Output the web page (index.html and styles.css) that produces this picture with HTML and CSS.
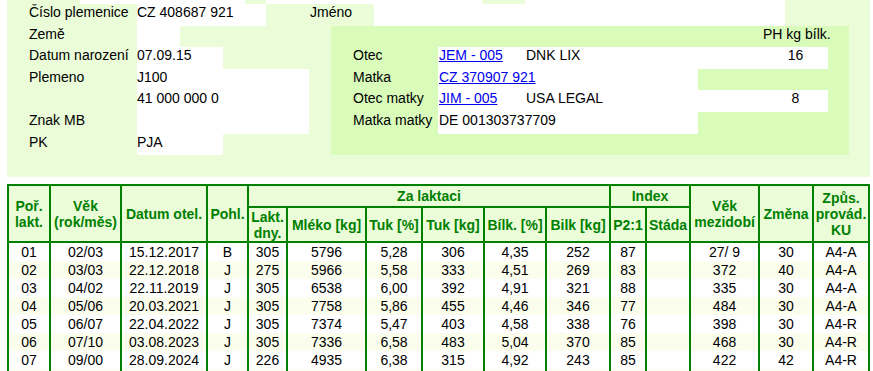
FILE: index.html
```html
<!DOCTYPE html>
<html lang="cs">
<head>
<meta charset="utf-8">
<title>Karta plemenice</title>
<link rel="stylesheet" href="styles.css">
</head>
<body>
<div class="top">
  <div class="strip">
    <span class="s1"></span><span class="s2 w"></span><span class="s3"></span><span class="s4 w"></span><span class="s5"></span><span class="s6 w"></span><span class="s7"></span>
  </div>
  <div class="row r1">
    <div class="lbl">Číslo plemenice</div>
    <div class="val w v1">CZ 408687 921</div>
    <div class="jm">Jméno</div>
    <div class="w jmv"></div>
  </div>
  <div class="main">
    <div class="left">
      <div class="row r2"><div class="lbl">Země</div><div class="val w vs"></div></div>
      <div class="row r3"><div class="lbl">Datum narození</div><div class="val w vm">07.09.15</div></div>
      <div class="row r4"><div class="lbl">Plemeno</div><div class="val w vl">J100</div></div>
      <div class="row r5"><div class="lbl"></div><div class="val w vl">41 000 000 0</div></div>
      <div class="row r6"><div class="lbl">Znak MB</div><div class="val w vl"></div></div>
      <div class="row r7"><div class="lbl">PK</div><div class="val w vm">PJA</div></div>
    </div>
    <div class="dark">
      <div class="row r2"><div class="dl"></div><div class="phh">PH kg bílk.</div></div>
      <div class="row r3"><div class="dl">Otec</div><div class="w dwide"><a href="#" class="lk">JEM - 005</a><span class="br">DNK LIX</span><span class="ph">16</span></div></div>
      <div class="row r4"><div class="dl">Matka</div><div class="w dnar"><a href="#" class="lk">CZ 370907 921</a></div></div>
      <div class="row r5"><div class="dl">Otec matky</div><div class="w dwide"><a href="#" class="lk">JIM - 005</a><span class="br">USA LEGAL</span><span class="ph">8</span></div></div>
      <div class="row r6"><div class="dl">Matka matky</div><div class="w dnar"><span class="lk">DE 001303737709</span></div></div>
      <div class="row r7"></div>
    </div>
  </div>
  <div class="tail"></div>
</div>

<table class="lak">
  <colgroup>
    <col class="c42"><col class="c71"><col class="c86"><col class="c41"><col class="c39"><col class="c79"><col class="c56"><col class="c62"><col class="c62"><col class="c64"><col class="c36"><col class="c44"><col class="c69"><col class="c54"><col class="c56">
  </colgroup>
  <thead>
    <tr class="hr1">
      <th rowspan="2">Poř.<br>lakt.</th>
      <th rowspan="2">Věk<br>(rok/měs)</th>
      <th rowspan="2">Datum otel.</th>
      <th rowspan="2">Pohl.</th>
      <th colspan="6">Za laktaci</th>
      <th colspan="2">Index</th>
      <th rowspan="2">Věk<br>mezidobí</th>
      <th rowspan="2">Změna</th>
      <th rowspan="2">Způs.<br>provád.<br>KU</th>
    </tr>
    <tr class="hr2">
      <th>Lakt.<br>dny.</th>
      <th>Mléko [kg]</th>
      <th>Tuk [%]</th>
      <th>Tuk [kg]</th>
      <th>Bílk. [%]</th>
      <th>Bilk [kg]</th>
      <th>P2:1</th>
      <th>Stáda</th>
    </tr>
  </thead>
  <tbody>
    <tr><td>01</td><td>02/03</td><td>15.12.2017</td><td>B</td><td>305</td><td>5796</td><td>5,28</td><td>306</td><td>4,35</td><td>252</td><td>87</td><td></td><td>27/ 9</td><td>30</td><td>A4-A</td></tr>
    <tr class="alt"><td>02</td><td>03/03</td><td>22.12.2018</td><td>J</td><td>275</td><td>5966</td><td>5,58</td><td>333</td><td>4,51</td><td>269</td><td>83</td><td></td><td>372</td><td>40</td><td>A4-A</td></tr>
    <tr><td>03</td><td>04/02</td><td>22.11.2019</td><td>J</td><td>305</td><td>6538</td><td>6,00</td><td>392</td><td>4,91</td><td>321</td><td>88</td><td></td><td>335</td><td>30</td><td>A4-A</td></tr>
    <tr class="alt"><td>04</td><td>05/06</td><td>20.03.2021</td><td>J</td><td>305</td><td>7758</td><td>5,86</td><td>455</td><td>4,46</td><td>346</td><td>77</td><td></td><td>484</td><td>30</td><td>A4-A</td></tr>
    <tr><td>05</td><td>06/07</td><td>22.04.2022</td><td>J</td><td>305</td><td>7374</td><td>5,47</td><td>403</td><td>4,58</td><td>338</td><td>76</td><td></td><td>398</td><td>30</td><td>A4-R</td></tr>
    <tr class="alt"><td>06</td><td>07/10</td><td>03.08.2023</td><td>J</td><td>305</td><td>7336</td><td>6,58</td><td>483</td><td>5,04</td><td>370</td><td>85</td><td></td><td>468</td><td>30</td><td>A4-R</td></tr>
    <tr><td>07</td><td>09/00</td><td>28.09.2024</td><td>J</td><td>226</td><td>4935</td><td>6,38</td><td>315</td><td>4,92</td><td>243</td><td>85</td><td></td><td>422</td><td>42</td><td>A4-R</td></tr>
    <tr class="alt"><td></td><td></td><td></td><td></td><td></td><td></td><td></td><td></td><td></td><td></td><td></td><td></td><td></td><td></td><td></td></tr>
  </tbody>
</table>
</body>
</html>
```

FILE: styles.css
```css
html, body {
  margin: 0;
  padding: 0;
  background: #ffffff;
}
body {
  padding-left: 7px;
  font-family: "Liberation Sans", Arial, sans-serif;
  font-size: 14px;
  line-height: 16px;
  color: #000000;
}

.top {
  width: 863px;
  background: #ebfcd9;
}
.w { background: #ffffff; }

.strip { display: flex; height: 4px; }
.strip span { display: block; height: 4px; }
.s1 { width: 73px; }
.s2 { width: 165px; }
.s3 { width: 21px; }
.s4 { width: 216px; }
.s5 { width: 43px; }
.s6 { width: 260px; }
.s7 { width: 85px; }

.row { display: flex; align-items: stretch; }
.r1 { height: 22px; }
.r2 { height: 21px; }
.r3 { height: 22px; }
.r4 { height: 21px; }
.r5 { height: 22px; }
.r6 { height: 22px; }
.r7 { height: 21px; }

.lbl {
  width: 130px;
  padding-left: 22px;
  box-sizing: border-box;
  white-space: nowrap;
}
.val { white-space: nowrap; }
.v1 { width: 129px; }
.vs { width: 43px; }
.vm { width: 86px; }
.vl { width: 172px; }

.jm {
  width: 108px;
  padding-left: 44px;
  box-sizing: border-box;
}
.jmv { width: 411px; }

.main { display: flex; }
.left { width: 324px; }
.dark {
  width: 518px;
  background: #d9fcba;
}

.dl {
  width: 107px;
  padding-left: 22px;
  box-sizing: border-box;
  white-space: nowrap;
}
.phh {
  margin-left: 325px;
  white-space: nowrap;
}
.dwide { width: 390px; display: flex; }
.dnar { width: 260px; display: flex; }
.lk {
  width: 88px;
  padding-left: 1px;
  box-sizing: border-box;
  white-space: nowrap;
  color: #0000ee;
}
.dnar .lk { width: auto; }
span.lk { color: #000000; }
.br { width: 237px; white-space: nowrap; }
.ph { width: 65px; text-align: center; }

.tail { height: 22px; }

/* lactation table */
.lak {
  margin-top: 7px;
  border-collapse: collapse;
  table-layout: fixed;
  width: 863px;
  border: 2px solid #008000;
}
.c36 { width: 36px; }
.c39 { width: 39px; }
.c41 { width: 41px; }
.c42 { width: 42px; }
.c44 { width: 44px; }
.c54 { width: 54px; }
.c56 { width: 56px; }
.c62 { width: 62px; }
.c64 { width: 64px; }
.c69 { width: 69px; }
.c71 { width: 71px; }
.c79 { width: 79px; }
.c86 { width: 86px; }

.lak th {
  background: #ebfcd9;
  color: #008000;
  font-weight: bold;
  border: 2px solid #008000;
  padding: 0;
  line-height: 16px;
  text-align: center;
  vertical-align: middle;
  white-space: nowrap;
}
.hr1 { height: 22px; }
.hr2 { height: 35px; }

.lak td {
  border-left: 2px solid #008000;
  border-right: 2px solid #008000;
  padding: 0;
  height: 18px;
  line-height: 18px;
  text-align: center;
  white-space: nowrap;
}
.lak tbody tr { background: #ffffff; }
.lak tbody tr.alt { background: #fbfeec; }
```
